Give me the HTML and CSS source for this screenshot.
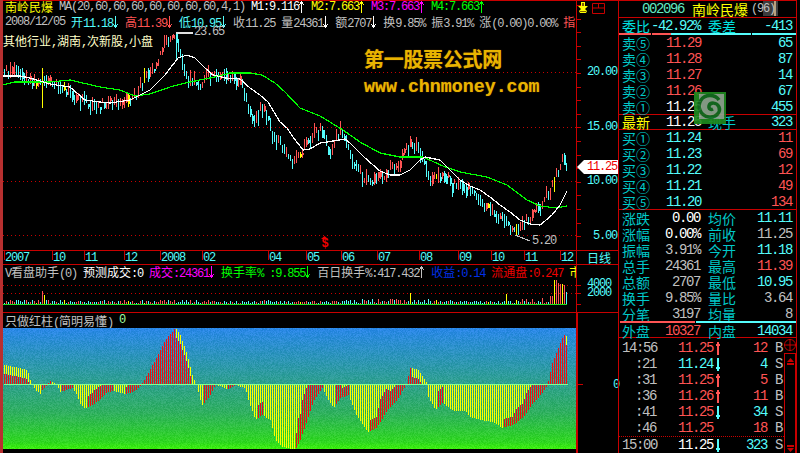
FILE: index.html
```html
<!DOCTYPE html>
<html lang="zh-CN">
<head>
<meta charset="utf-8">
<title>南岭民爆</title>
<link rel="stylesheet" href="styles.css">
</head>
<body>
<svg class="defs" width="0" height="0" aria-hidden="true">
  <symbol id="up" viewBox="0 0 6 12"><path d="M2.500 0v12M2.500 0.500 0.500 4M2.500 0.500 4.500 4"/></symbol>
  <symbol id="down" viewBox="0 0 6 12"><path d="M2.500 0v12M2.500 11.500 0.500 8M2.500 11.500 4.500 8"/></symbol>
</svg>
<div class="app">
  <div class="left">
    <section class="panel price">
      <div class="main">
        <svg id="priceChart" class="chart" width="573" height="250" viewBox="3 0 573 250"></svg>
        <div class="legend">
          <div class="line">
            <span class="yl">南岭民爆</span>
            <span class="gr n">MA(20,60,60,60,60,60,60,60,4,1)</span>
            <span class="wh item"><i class="n">M1:9.116</i><svg class="a"><use href="#up"/></svg></span>
            <span class="yl item"><i class="n">M2:7.663</i><svg class="a"><use href="#up"/></svg></span>
            <span class="mg item"><i class="n">M3:7.663</i><svg class="a"><use href="#up"/></svg></span>
            <span class="gn item"><i class="n">M4:7.663</i><svg class="a"><use href="#up"/></svg></span>
          </div>
          <div class="line second">
            <span class="gr n">2008/12/05</span>
            <span class="cy item">开<i class="n">11.18</i><svg class="a"><use href="#down"/></svg></span>
            <span class="rd item">高<i class="n">11.39</i><svg class="a"><use href="#down"/></svg></span>
            <span class="cy item">低<i class="n">10.95</i><svg class="a"><use href="#down"/></svg></span>
            <span class="gr">收<i class="n">11.25</i></span>
            <span class="gr item">量<i class="n">24361</i><svg class="a wh"><use href="#down"/></svg></span>
            <span class="gr item">额<i class="n">2707</i><svg class="a wh"><use href="#down"/></svg></span>
            <span class="gr">换<i class="n">9.85%</i></span>
            <span class="gr">振<i class="n">3.91%</i></span>
            <span class="gr">涨<i class="n">(0.00)0.00%</i></span>
            <span class="rd">指</span>
          </div>
          <div class="tags">其他行业<i class="n">,</i>湖南<i class="n">,</i>次新股<i class="n">,</i>小盘</div>
        </div>
        <div class="mark hi n">23.65</div>
        <div class="mark lo n">5.20</div>
        <div class="signal"><svg width="7" height="3" viewBox="0 0 7 3"><path d="M3.5 0 7 3H0z"/></svg><span class="n">$</span></div>
        <div class="watermark">
          <div class="wm-cn">第一股票公式网</div>
          <div class="wm-en">www.chnmoney.com</div>
        </div>
      </div>
      <div class="axis price-axis">
        <div class="tools">
          <svg width="10" height="12" viewBox="0 0 10 12"><path class="tool-y" d="M3 0h4v4h3L7 7l2 2-1 2H2L1 9l2-2-3-3h3z"/><path class="tool-d" d="M4 1h2v3H4zM2 9h6v1H2z"/></svg>
          <svg width="13" height="11" viewBox="0 0 13 11"><path class="tool-r" d="M.5.5h12v10H.5zM6.5.5v4.500M.5 5h12"/></svg>
        </div>
        <div class="axis-labels">
          <span class="n">20.00</span>
          <span class="n">15.00</span>
          <span class="n">10.00</span>
          <span class="n">&nbsp;5.00</span>
        </div>
        <div class="last-tag n">11.25</div>
      </div>
    </section>

    <section class="panel dates">
      <div class="main months n">
        <span class="m" style="width:48px">2007</span>
        <span class="m" style="width:32px">10</span>
        <span class="m" style="width:40px">11</span>
        <span class="m" style="width:36px">12</span>
        <span class="m" style="width:42px">2008</span>
        <span class="m" style="width:66px">02</span>
        <span class="m" style="width:38px">04</span>
        <span class="m" style="width:35px">05</span>
        <span class="m" style="width:36px">06</span>
        <span class="m" style="width:42px">07</span>
        <span class="m" style="width:39px">08</span>
        <span class="m" style="width:33px">09</span>
        <span class="m" style="width:33px">10</span>
        <span class="m" style="width:36px">11</span>
        <span class="m" style="width:15px">12</span>
      </div>
      <div class="axis day-label">日线</div>
    </section>

    <section class="panel volume">
      <div class="main">
        <div class="line title-line">
          <span class="gr"><i class="n">V</i>看盘助手<i class="n">(0)</i></span>
          <span class="wh">预测成交<i class="n">:0</i></span>
          <span class="mg item">成交<i class="n">:24361</i><svg class="a"><use href="#down"/></svg></span>
          <span class="gn item">换手率<i class="n">% :9.855</i><svg class="a"><use href="#down"/></svg></span>
          <span class="gr item">百日换手<i class="n">%:417.432</i><svg class="a"><use href="#up"/></svg></span>
          <span class="bl">收益<i class="n">:0.14</i></span>
          <span class="dr">流通盘<i class="n">:0.247</i></span>
          <span class="yl">市</span>
        </div>
        <svg id="volChart" class="chart" width="573" height="32" viewBox="3 280 573 32"></svg>
      </div>
      <div class="axis vol-axis n">
        <span>4000</span>
        <span>2000</span>
      </div>
    </section>

    <section class="panel indicator">
      <div class="main">
        <div class="line title-line">
          <span class="gr">只做红柱<i class="n">(</i>简明易懂<i class="n">)</i></span>
          <span class="lg n">0</span>
        </div>
        <canvas id="indChart" width="573" height="121"></canvas>
      </div>
      <div class="axis ind-axis"><span class="n">0</span></div>
    </section>
  </div>

  <aside class="quote">
    <span class="stub"></span>
    <header class="q-head">
      <span class="code n">002096</span>
      <span class="yl name">南岭民爆</span>
      <span class="gr n small">(96)</span>
    </header>
    <div class="stat-row ratio">
      <span>委比</span><b class="n">-42.92%</b><span>委差</span><b class="n">-413</b>
    </div>
    <div class="split split-a"><span></span><span></span></div>
    <div class="book sell">
      <div class="b-row"><span class="lb">卖⑤</span><span class="n rd">11.29</span><span></span><span class="n qty cy">65</span></div>
      <div class="b-row"><span class="lb">卖④</span><span class="n rd">11.28</span><span></span><span class="n qty cy">87</span></div>
      <div class="b-row"><span class="lb">卖③</span><span class="n rd">11.27</span><span></span><span class="n qty cy">14</span></div>
      <div class="b-row"><span class="lb">卖②</span><span class="n rd">11.26</span><span></span><span class="n qty cy">67</span></div>
      <div class="b-row"><span class="lb">卖①</span><span class="n wh">11.25</span><span></span><span class="n qty cy">455</span></div>
    </div>
    <div class="book latest">
      <div class="b-row"><span class="yl">最新</span><span class="n wh">11.25</span><span class="lb">现手</span><span class="n qty cy">323</span></div>
    </div>
    <div class="book buy">
      <div class="b-row"><span class="lb">买①</span><span class="n cy">11.24</span><span></span><span class="n qty rd">11</span></div>
      <div class="b-row"><span class="lb">买②</span><span class="n cy">11.23</span><span></span><span class="n qty rd">69</span></div>
      <div class="b-row"><span class="lb">买③</span><span class="n cy">11.22</span><span></span><span class="n qty rd">12</span></div>
      <div class="b-row"><span class="lb">买④</span><span class="n cy">11.21</span><span></span><span class="n qty rd">49</span></div>
      <div class="b-row"><span class="lb">买⑤</span><span class="n cy">11.20</span><span></span><span class="n qty rd">134</span></div>
    </div>
    <div class="stats">
      <div class="stat-row"><span>涨跌</span><b class="n wh">0.00</b><span>均价</span><b class="n cy">11.11</b></div>
      <div class="stat-row"><span>涨幅</span><b class="n wh">0.00%</b><span>前收</span><b class="n gr">11.25</b></div>
      <div class="stat-row"><span>振幅</span><b class="n gr">3.91%</b><span>今开</span><b class="n cy">11.18</b></div>
      <div class="stat-row"><span>总手</span><b class="n gr">24361</b><span>最高</span><b class="n rd">11.39</b></div>
      <div class="stat-row"><span>总额</span><b class="n gr">2707</b><span>最低</span><b class="n cy">10.95</b></div>
      <div class="stat-row"><span>换手</span><b class="n gr">9.85%</b><span>量比</span><b class="n gr">3.64</b></div>
      <div class="stat-row"><span>分笔</span><b class="n gr">3197</b><span>均量</span><b class="n gr">8</b></div>
    </div>
    <div class="split split-b"><span></span><span></span></div>
    <div class="stat-row outer">
      <span>外盘</span><b class="n rd">10327</b><span>内盘</span><b class="n cy">14034</b>
    </div>
    <div class="ticks">
      <div class="tick-list">
        <div class="t-row"><span class="n gr">14:56</span><span class="n rd pr">11.25</span><svg class="ar rd"><use href="#up"/></svg><span class="n rd qt">12</span><span class="n gr sd">B</span></div>
        <div class="t-row"><span class="n gr">:21</span><span class="n cy pr">11.24</span><svg class="ar cy"><use href="#down"/></svg><span class="n cy qt">4</span><span class="n gr sd">S</span></div>
        <div class="t-row"><span class="n gr">:31</span><span class="n rd pr">11.25</span><svg class="ar rd"><use href="#up"/></svg><span class="n rd qt">5</span><span class="n gr sd">B</span></div>
        <div class="t-row"><span class="n gr">:36</span><span class="n rd pr">11.26</span><svg class="ar rd"><use href="#up"/></svg><span class="n rd qt">11</span><span class="n gr sd">B</span></div>
        <div class="t-row"><span class="n gr">:41</span><span class="n rd pr">11.25</span><svg class="ar cy"><use href="#down"/></svg><span class="n cy qt">34</span><span class="n gr sd">S</span></div>
        <div class="t-row"><span class="n gr">:46</span><span class="n rd pr">11.25</span><span></span><span class="n rd qt">18</span><span class="n gr sd">B</span></div>
        <div class="t-row last"><span class="n gr">15:00</span><span class="n wh pr">11.25</span><svg class="ar cy"><use href="#down"/></svg><span class="n cy qt">323</span><span class="n gr sd">S</span></div>
      </div>
      <div class="scroll">
        <svg class="sc-btn" width="12" height="15" viewBox="0 0 12 15"><path d="M6 1.500a5.500 5.500 0 1 0 .01 0zM0 7h12M6 1v12"/></svg>
        <div class="sc-track">
          <svg class="sc-up" width="9" height="7" viewBox="0 0 9 7"><path d="M4.500 0 8 4H1zM1 5h7v2H1z"/></svg>
          <svg class="sc-down" width="9" height="7" viewBox="0 0 9 7"><path d="M1 0h7v2H1zM1 3h7L4.500 7z"/></svg>
        </div>
      </div>
    </div>
    <div class="logo">
      <svg width="32" height="32" viewBox="0 0 32 32">
        <rect class="logo-bg" width="32" height="32"/>
        <rect class="logo-in" x="5" y="2" width="25" height="25"/>
        <path class="logo-g" d="M25 8C21 2 11 2 7 8C3 14 6 24 15 25C22 26 27 20 25 15C23 10 16 10 15 14C14.500 17 17 18 19 17"/>
      </svg>
    </div>
  </aside>
</div>
<script src="chart.js"></script>
</body>
</html>
```

FILE: styles.css
```css
* { box-sizing: border-box; }
html, body { margin: 0; padding: 0; background: #000; }
body {
  width: 800px;
  height: 453px;
  overflow: hidden;
  font: 12px/14px "Noto Sans CJK SC", sans-serif;
  color: #c0c0c0;
}
i { font-style: normal; }
b { font-weight: normal; }
.defs { position: absolute; }
.defs path { fill: none; stroke: currentColor; shape-rendering: crispEdges; }

/* latin text sits on a 6px (and, in the quote column, 7px) cell */
.n {
  font-family: "Liberation Mono", monospace;
  letter-spacing: -1.2px;
  white-space: pre;
}
.item { display: flex; align-items: baseline; }
.a { display: block; flex: none; width: 6px; height: 12px; align-self: center; }

.yl { color: #ffff00; }
.gr { color: #c0c0c0; }
.wh { color: #fff; }
.mg { color: #ff00ff; }
.gn { color: #00ff00; }
.cy { color: #54fcfc; }
.rd { color: #ff5454; }
.bl { color: #0030e8; }
.dr { color: #f00000; }
.lg { color: #a0ffa0; }

.app { display: flex; width: 800px; height: 453px; }

/* ---------- left column ---------- */
.left { width: 618px; height: 453px; border-left: 3px solid #b83030; }
.panel { display: flex; border-bottom: 1px solid #c80000; }
.main { position: relative; width: 573px; overflow: hidden; }
.axis { position: relative; width: 42px; border-left: 1px solid #c80000; color: #54fcfc; }
.chart { display: block; }
.chart .dot { stroke: #c80000; stroke-dasharray: 1 3; fill: none; }

.price { height: 251px; border-top: 1px solid #c80000; }
.dates { height: 14px; }
.volume { height: 48px; }
.indicator { height: 140px; border-bottom: 0; }

.line { display: flex; gap: 6px; height: 14px; white-space: nowrap; }

.price .chart { margin-top: -1px; }
.legend { position: absolute; left: 2px; top: -1px; }
.legend .line { height: 14px; }
.legend .second { margin-top: 1px; }
.tags { margin-top: 5px; color: #ffffc8; margin-left: -2px; }
.mark { position: absolute; color: #c0c0c0; line-height: 12px; }
.hi { left: 191px; top: 25px; }
.lo { left: 529px; top: 234px; }
.signal { position: absolute; left: 318px; top: 235px; display: flex; flex-direction: column; align-items: center; width: 7px; height: 13px; color: #f00000; line-height: 10px; font-size: 12px; font-weight: bold; }
.signal svg { fill: #f00000; display: block; flex: none; }
.watermark { position: absolute; left: 361px; top: 46px; color: #e8b400; font-weight: bold; }
.wm-cn { font-size: 20px; line-height: 24px; letter-spacing: -.3px; text-shadow: 0 0 1px #a06000; }
.wm-en { font: bold 18.300px/22px "Liberation Mono", monospace; margin-top: 5px; text-shadow: 0 0 1px #a06000; }

.price-axis {
  background:
    repeating-linear-gradient(#c80000 0 1px, transparent 1px 13.600px) 0 4px / 4px 100% no-repeat;
}
.tools { display: flex; gap: 4px; align-items: center; padding: 1px 0 0 1px; }
.tool-y { fill: #ffff00; }
.tool-d { fill: #806000; }
.tool-r { fill: none; stroke: #c80000; }
.axis-labels { display: flex; flex-direction: column; gap: 42.500px; margin-top: 52px; padding-left: 10px; }
.axis-labels span { line-height: 12px; height: 12px; }
.last-tag {
  position: absolute;
  left: 0;
  top: 159px;
  width: 41px;
  height: 14px;
  padding-left: 10px;
  background: #fff;
  color: #f00000;
  line-height: 14px;
  clip-path: polygon(0 50%, 7px 0, 100% 0, 100% 100%, 7px 100%);
}

.months { display: flex; padding-left: 1px; color: #54fcfc; line-height: 14px; }
.m { position: relative; flex: none; padding-left: 1px; overflow: visible; }
.m::before { content: ""; position: absolute; left: 0; top: 0; height: 9px; border-left: 1px solid #c80000; }
.day-label { padding-left: 10px; line-height: 14px; }

.title-line { line-height: 15px; padding-left: 2px; height: 15px; }
.volume .title-line { margin-top: -1px; }
.volume .chart { margin-top: 1px; }
.vol-axis {
  display: flex;
  flex-direction: column;
  padding: 15px 0 0 10px;
  line-height: 9px;
  background:
    linear-gradient(#c80000, #c80000) 0 20px / 4px 1px no-repeat,
    linear-gradient(#c80000, #c80000) 0 28px / 4px 1px no-repeat,
    linear-gradient(#c80000, #c80000) 0 39px / 4px 1px no-repeat;
}
.indicator canvas { display: block; }
.ind-axis {
  padding: 63px 0 0 36px;
  line-height: 14px;
  background: linear-gradient(#c80000, #c80000) 0 71px / 5px 1px no-repeat;
  border-left-width: 2px;
}
.ind-axis span { margin-left: -1px; }

/* ---------- quote column ---------- */
.quote {
  position: relative;
  width: 179px;
  height: 453px;
  border-left: 1px solid #c80000;
  border-right: 1px solid #c80000;
  border-top: 1px solid #c80000;
  font-size: 14px;
  line-height: 16px;
  color: #00c8c8;
}
.quote .n { letter-spacing: -1.400px; font-size: 14px; }
.q-head {
  position: relative;
  display: flex;
  align-items: center;
  height: 17px;
  padding-left: 23px;
  border-bottom: 1px solid #c80000;
}
.q-head .code { color: #60e8c0; }
.q-head .name { margin-left: 8px; }
.quote .q-head .small { margin-left: 3px; font-size: 12px; letter-spacing: -1.200px; }
.stub {
  position: absolute;
  left: 144px;
  top: 0;
  width: 15px;
  height: 15px;
  background: linear-gradient(90deg, #3c3c3c 0 72%, #b8a080 72% 88%, #404040 88%);
}

.stat-row {
  display: grid;
  grid-template-columns: 28px 50px 8px 28px 1fr;
  padding: 0 4px 0 3px;
  height: 16px;
  align-items: center;
}
.stat-row b { text-align: right; }
.stat-row span:nth-of-type(2) { grid-column: 4; }
.stat-row b:last-child { grid-column: 5; }
.ratio { height: 15px; color: #00e0e0; }
.ratio b { color: #54fcfc; }

.split { display: flex; height: 2px; }
.split span { display: block; height: 2px; }
.split-a span:first-child { width: 52px; background: repeating-linear-gradient(90deg, #ff5454 0 32px, #000 32px 33px); }
.split-a span:last-child { flex: 1; background: repeating-linear-gradient(90deg, #54fcfc 0 80px, #000 80px 81px); }
.split-b { margin-left: 1px; }
.split-b span:first-child { width: 75px; background: #ff5454; }
.split-b span:last-child { flex: 1; margin-left: 1px; background: #54fcfc; }

.book { border-bottom: 1px solid #c80000; }
.sell { height: 80px; }
.latest { height: 15px; }
.buy { height: 80px; }
.b-row {
  display: grid;
  grid-template-columns: 44px 42px 28px 1fr;
  padding: 0 4px 0 3px;
  height: 16px;
  align-items: center;
}
.latest .b-row { height: 14px; line-height: 14px; }
.qty { text-align: right; }

.stats { height: 111px; }
.outer { height: 15px; border-bottom: 1px solid #c80000; }

.ticks { display: flex; height: 115px; }
.tick-list { width: 165px; padding-top: 2px; }
.t-row {
  display: grid;
  grid-template-columns: 34px 57px 10px 44px 15px;
  padding-left: 3px;
  height: 16px;
  align-items: center;
}
.t-row > span:first-child { text-align: right; }
.pr { padding-left: 22px; }
.ar { display: block; width: 7px; height: 13px; margin-left: 2px; }
.qt { text-align: right; }
.sd { text-align: right; }
.last { border-top: 1px dotted #c80000; height: 17px; }

.scroll { width: 12px; display: flex; flex-direction: column; }
.sc-btn { display: block; fill: none; stroke: #c80000; }
.sc-track {
  flex: 1;
  display: flex;
  flex-direction: column;
  justify-content: space-between;
  align-items: center;
  border: 1px solid #c80000;
  border-bottom: 0;
  padding: 4px 0 1px;
}
.sc-up, .sc-down { fill: #c80000; display: block; }

.logo { position: absolute; left: 75px; top: 91px; width: 32px; height: 32px; opacity: .92; }
.logo svg { display: block; }
.logo-bg { fill: #1f8a1f; }
.logo-in { fill: #8fa58f; }
.logo-g { fill: none; stroke: #146e20; stroke-width: 3.500; }
```

FILE: chart.js
```js
(function () {
  var NS = "http://www.w3.org/2000/svg";
  var RED = "#ff5454", CYAN = "#54fcfc", YEL = "#ffff00";

  var seed = 20081205;
  function rnd() {
    seed = (seed * 1103515245 + 12345) & 0x7fffffff;
    return seed / 0x7fffffff;
  }
  function lerp(pts, x) {
    if (x <= pts[0][0]) return pts[0][1];
    for (var i = 1; i < pts.length; i++) {
      if (x <= pts[i][0]) {
        var a = pts[i - 1], b = pts[i];
        return a[1] + (b[1] - a[1]) * (x - a[0]) / (b[0] - a[0]);
      }
    }
    return pts[pts.length - 1][1];
  }
  function el(parent, name, attrs) {
    var e = document.createElementNS(NS, name);
    for (var k in attrs) e.setAttribute(k, attrs[k]);
    parent.appendChild(e);
    return e;
  }
  function vbar(svg, x, y1, y2, color) {
    el(svg, "rect", { x: x, y: Math.round(Math.min(y1, y2)), width: 1, height: Math.max(1, Math.round(Math.abs(y2 - y1))), fill: color, "shape-rendering": "crispEdges" });
  }
  function poly(svg, pts, color) {
    el(svg, "polyline", {
      points: pts.map(function (p) { return p.join(","); }).join(" "),
      fill: "none", stroke: color, "stroke-width": 1.2, "shape-rendering": "crispEdges"
    });
  }

  /* ---- price ---- */
  var PRICE = [[4,70],[15,72],[30,80],[42,83],[50,80],[60,85],[72,96],[80,100],[90,106],[100,104],[115,102],[125,100],[135,95],[145,78],[155,68],[165,42],[175,38],[180,55],[185,75],[192,80],[200,85],[210,76],[220,75],[230,78],[240,82],[250,112],[255,122],[263,105],[272,135],[285,150],[292,166],[300,152],[303,150],[315,130],[323,133],[330,152],[340,130],[348,148],[355,165],[365,180],[380,177],[397,165],[412,142],[420,152],[430,180],[443,173],[453,187],[470,190],[483,207],[497,217],[513,230],[527,220],[540,207],[550,190],[558,172],[562,162],[567,167]];
  var WHITE = [[3,76],[20,76],[30,78],[50,84],[70,87],[85,100],[100,102],[110,103],[130,100],[140,95],[150,90],[165,75],[178,58],[187,55],[195,58],[205,68],[213,75],[225,78],[240,79],[250,88],[260,95],[268,102],[280,122],[287,128],[293,137],[303,150],[310,149],[320,143],[327,142],[345,139],[350,143],[365,158],[380,171],[390,175],[400,175],[410,170],[420,160],[425,157],[440,160],[450,170],[460,180],[470,186],[480,190],[490,197],[500,205],[510,212],[520,220],[530,224],[540,225],[545,221],[552,215],[560,205],[567,191]];
  var GREEN = [[3,85],[15,82],[30,82],[50,82],[70,80],[100,87],[120,90],[135,96],[150,94],[170,87],[185,83],[200,80],[215,77],[230,73],[250,73],[262,75],[275,83],[285,92],[300,108],[320,116],[343,130],[360,142],[380,153],[400,157],[423,157],[443,166],[460,172],[487,177],[507,185],[527,200],[540,206],[557,208],[567,206]];

  var price = document.getElementById("priceChart");
  [72, 127, 181, 235].forEach(function (y) {
    el(price, "line", { x1: 3, x2: 576, y1: y + 0.5, y2: y + 0.5, "class": "dot" });
  });

  var candles = [];
  var prev = PRICE[0][1];
  for (var x = 4; x <= 566; x += 2) {
    var c = lerp(PRICE, x) + (rnd() - 0.5) * 9;
    var half = 1 + rnd() * 4;
    var hw = half + rnd() * 4, lw = half + rnd() * 4;
    var up = c < prev + (rnd() - 0.5) * 3;
    var col = up ? RED : CYAN;
    if (rnd() < 0.03) col = YEL;
    var hi = c - hw, lo = c + lw;
    if (x === 42) { hi = 68; lo = 108; col = YEL; }
    if (x === 176) { hi = 33; lo = 60; col = CYAN; }
    if (x === 516) { hi = 224; lo = 235; col = YEL; }
    if (x !== 176) hi = Math.max(hi, 35);
    lo = Math.min(lo, 235);
    vbar(price, x, hi, lo, col);
    if (rnd() < 0.25) vbar(price, x + 1, c - half, c + half, col);
    candles.push({ x: x, col: col });
    prev = c;
  }
  poly(price, GREEN, "#00ff00");
  poly(price, WHITE, "#ffffff");
  poly(price, [[176, 33], [193, 33]], "#e0e0e0");
  poly(price, [[515, 235], [530, 241]], "#c0c0c0");

  /* ---- volume ---- */
  var AMP = [[4,3],[140,3],[160,4],[180,3],[300,2.5],[335,3],[400,5],[412,6],[440,3],[500,2.5],[530,5],[545,8],[552,14],[566,14]];
  var SPECIAL = { 42: [13, RED], 44: [9, YEL], 410: [11, YEL], 506: [10, YEL], 554: [24, YEL], 556: [25, RED], 558: [21, RED], 560: [20, RED], 562: [20, YEL], 564: [19, RED], 566: [12, CYAN] };
  var vol = document.getElementById("volChart");
  [285, 293].forEach(function (y) {
    el(vol, "line", { x1: 3, x2: 576, y1: y + 0.5, y2: y + 0.5, "class": "dot" });
  });
  candles.forEach(function (k) {
    var s = SPECIAL[k.x];
    var h = s ? s[0] : 1 + rnd() * lerp(AMP, k.x);
    vbar(vol, k.x, 304, 304 - h, s ? s[1] : k.col);
  });
  el(vol, "rect", { x: 3, y: 304, width: 564, height: 1, fill: "#20e020", "shape-rendering": "crispEdges" });

  /* ---- indicator ---- */
  var IND = [[4,365],[20,368],[27,370],[31,383],[35,390],[40,394],[42,390],[50,381],[56,384],[60,392],[66,390],[72,388],[75,392],[80,404],[85,409],[92,405],[100,399],[107,392],[113,391],[125,394],[135,391],[140,386],[145,378],[155,360],[165,340],[175,328],[180,335],[187,355],[192,375],[196,384],[200,400],[202,405],[210,395],[215,385],[220,386],[227,390],[235,385],[245,388],[248,400],[255,420],[262,415],[270,420],[275,440],[282,447],[295,450],[300,440],[307,420],[313,402],[322,388],[327,398],[333,408],[340,398],[348,395],[355,413],[367,432],[377,427],[387,410],[397,400],[406,384],[410,368],[417,369],[423,377],[427,383],[428,397],[435,410],[442,403],[453,411],[465,411],[470,417],[480,420],[493,422],[502,428],[513,425],[523,417],[533,403],[543,392],[547,385],[552,363],[557,350],[563,335],[567,336]];
  var STOPS = [[0,[42,136,232]],[0.45,[47,160,144]],[0.7,[48,176,96]],[0.95,[48,216,32]],[1,[60,240,16]]];
  var cv = document.getElementById("indChart");
  var ctx = cv.getContext("2d");
  var W = cv.width, H = cv.height, OX = 3, OY = 328;
  var img = ctx.createImageData(W, H);
  for (var py = 0; py < H; py++) {
    var t = py / (H - 1), s0 = STOPS[0], s1 = STOPS[1];
    for (var si = 1; si < STOPS.length; si++) {
      if (t <= STOPS[si][0]) { s0 = STOPS[si - 1]; s1 = STOPS[si]; break; }
    }
    var f = (t - s0[0]) / (s1[0] - s0[0]);
    for (var px = 0; px < W; px++) {
      var n = (rnd() - 0.5) * 26, off = (px * 4) + (py * W * 4);
      for (var ch = 0; ch < 3; ch++) {
        img.data[off + ch] = s0[1][ch] + (s1[1][ch] - s0[1][ch]) * f + n * (ch === 1 ? 0.6 : 1);
      }
      img.data[off + 3] = 255;
    }
  }
  ctx.putImageData(img, 0, 0);

  var ZERO = 384;
  function seg(xx, a, b, color) {
    ctx.fillStyle = color;
    var y1 = Math.round(Math.min(a, b)), y2 = Math.round(Math.max(a, b));
    ctx.fillRect(xx - OX, y1 - OY, 1, Math.max(1, y2 - y1));
  }
  for (var bx = 4; bx <= 566; bx += 2) {
    var v = lerp(IND, bx), pv = lerp(IND, bx - 2);
    var rising = v < pv;
    if (v < ZERO) {
      if (rising) {
        seg(bx, ZERO, v, "#f01010");
      } else {
        seg(bx, ZERO, v + Math.min(9, ZERO - v), "#f01010");
        seg(bx, v + Math.min(9, ZERO - v), v, YEL);
      }
    } else {
      seg(bx, ZERO, v, YEL);
      if (rising) {
        var len = Math.min(v - ZERO, 6 + (pv - v) * 5);
        seg(bx, v - len, v, "#f01010");
      }
    }
  }
  ctx.fillStyle = "#80ff90";
  ctx.fillRect(1, ZERO - OY, 564, 1);
})();
```
